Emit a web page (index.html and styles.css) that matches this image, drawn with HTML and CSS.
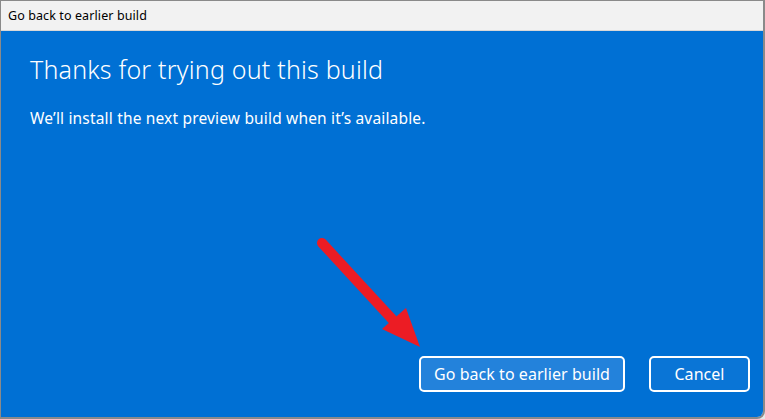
FILE: index.html
```html
<!DOCTYPE html>
<html>
<head>
<meta charset="utf-8">
<link rel="stylesheet" href="styles.css">
</head>
<body>
<div class="window">
  <div class="titlebar">Go back to earlier build</div>
  <div class="content">
    <div class="text">
      <h1 class="heading">Thanks for trying out this build</h1>
      <p class="sub">We’ll install the next preview build when it’s available.</p>
    </div>
    <div class="actions">
      <button class="btn btn-primary">Go back to earlier build</button>
      <button class="btn">Cancel</button>
    </div>
    <svg class="arrow" width="120" height="120" viewBox="0 0 120 120">
      <line x1="6" y1="8" x2="76" y2="84" stroke="#ec1c24" stroke-width="10" stroke-linecap="round"/>
      <polygon points="66,94 90,73 104,112" fill="#ec1c24"/>
    </svg>
  </div>
</div>
</body>
</html>
```
FILE: styles.css
```css
html, body {
  margin: 0;
  padding: 0;
  background: #e8e8e8;
}
.window {
  width: 765px;
  height: 419px;
  box-sizing: border-box;
  border: 1px solid #8a8a8a;
  border-right-width: 2px;
  border-bottom-width: 2px;
  border-bottom-right-radius: 8px;
  display: flex;
  flex-direction: column;
  overflow: hidden;
  font-family: "Noto Sans", "Open Sans", sans-serif;
}
.titlebar {
  height: 30px;
  box-sizing: border-box;
  background: #f2f2f2;
  border-bottom: 1px solid #d8d8d8;
  color: #000;
  font-size: 12.5px;
  line-height: 29px;
  padding-left: 7px;
  letter-spacing: 0.1px;
}
.content {
  position: relative;
  flex: 1;
  background: #0070d4;
  display: flex;
  flex-direction: column;
  justify-content: space-between;
  padding: 21px 13px 25px 29px;
  color: #fff;
}
.heading {
  margin: 0;
  font-size: 25px;
  font-weight: 300;
  line-height: 34px;
  letter-spacing: 0.2px;
}
.sub {
  margin: 22px 0 0 0;
  font-size: 15.5px;
  line-height: 20px;
  letter-spacing: 0.17px;
}
.actions {
  display: flex;
  justify-content: flex-end;
  gap: 24px;
}
.btn {
  height: 36px;
  box-sizing: border-box;
  border: 2px solid #fff;
  border-radius: 5px;
  background: #0a75d6;
  color: #fff;
  font-family: "Noto Sans", "Open Sans", sans-serif;
  font-size: 16px;
  letter-spacing: 0.05px;
  padding: 0 12px;
  min-width: 101px;
}
.btn-primary {
  width: 206px;
  background: #2382db;
}
.arrow {
  position: absolute;
  left: 315px;
  top: 204px;
}
```
